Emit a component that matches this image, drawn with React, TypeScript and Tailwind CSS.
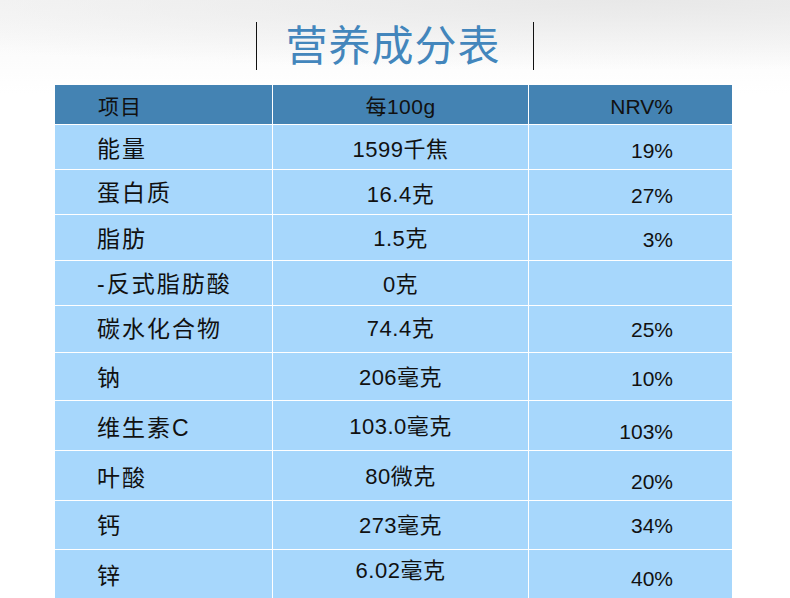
const rows = [
  { name: '能量', amount: '1599千焦', nrv: '19%', h: 'h-[44px]', a: 'pt-[5px]', b: 'pt-[6px]', c: 'pt-[6px]' },
  { name: '蛋白质', amount: '16.4克', nrv: '27%', h: 'h-[44px]', a: 'pt-[2px]', b: 'pt-[6px]', c: 'pt-[6px]' },
  { name: '脂肪', amount: '1.5克', nrv: '3%', h: 'h-[45px]', a: 'pt-[3px]', b: 'pt-[3px]', c: 'pt-[3px]' },
  { name: '-反式脂肪酸', amount: '0克', nrv: '', h: 'h-[44px]', a: 'pt-[3px]', b: 'pt-[3px]', c: 'pt-[3px]' },
  { name: '碳水化合物', amount: '74.4克', nrv: '25%', h: 'h-[46px]', a: 'pt-0', b: 'pt-0', c: 'pt-0' },
  { name: '钠', amount: '206毫克', nrv: '10%', h: 'h-[47px]', a: 'pt-[3px]', b: 'pt-[3px]', c: 'pt-[3px]' },
  { name: '维生素C', amount: '103.0毫克', nrv: '103%', h: 'h-[49px]', a: 'pt-[5px]', b: 'pt-[3px]', c: 'pt-[12px]' },
  { name: '叶酸', amount: '80微克', nrv: '20%', h: 'h-[49px]', a: 'pt-[5px]', b: 'pt-[3px]', c: 'pt-[12px]' },
  { name: '钙', amount: '273毫克', nrv: '34%', h: 'h-[48px]', a: 'pt-[3px]', b: 'pt-[1px]', c: 'pt-[1px]' },
  { name: '锌', amount: '6.02毫克', nrv: '40%', h: 'h-[48px]', a: 'pt-[4px]', b: 'pb-[7px]', c: 'pt-[8px]' },
];

const font = "font-['Liberation_Sans','Noto_Sans_CJK_SC',sans-serif]";

export default function App() {
  return (
    <div
      className={`w-[790px] h-[598px] overflow-hidden bg-white bg-[radial-gradient(120%_70px_at_80%_0%,#e8e8e8,rgba(255,255,255,0)),linear-gradient(180deg,#f7f7f7_0px,#ffffff_95px)] ${font} text-[#111]`}
    >
      {/* title */}
      <div className="h-[85px] flex justify-center pt-[22px]">
        <div className="flex items-start">
          <div className="w-px h-[48px] bg-[#111]" />
          <div className="w-[276px] flex justify-center pr-[4px]">
            <span className="text-[42px] leading-[42px] tracking-[1px] text-[#4386bc] font-['Noto_Sans_CJK_SC',sans-serif]">
              营养成分表
            </span>
          </div>
          <div className="w-px h-[48px] bg-[#111]" />
        </div>
      </div>

      {/* table */}
      <div className="ml-[55px] w-[677px] grid grid-cols-[217px_255px_203px] gap-px bg-white">
        <div className="h-[39px] bg-[#4483b3] flex items-center pl-[43px] pt-[4px] text-[21px] tracking-[1px]">项目</div>
        <div className="h-[39px] bg-[#4483b3] flex items-center justify-center pt-[4px] text-[21px] tracking-[0.5px]">每100g</div>
        <div className="h-[39px] bg-[#4483b3] flex items-center justify-end pr-[59px] pt-[4px] text-[21px]">NRV%</div>

        {rows.map((r) => (
          <div key={r.name} className="contents">
            <div className={`${r.h} bg-[#a7d7fc] flex items-center pl-[42px] text-[23px] tracking-[2px] leading-none ${r.a}`}>
              {r.name}
            </div>
            <div className={`${r.h} bg-[#a7d7fc] flex items-center justify-center text-[22px] tracking-[0.5px] leading-none ${r.b}`}>
              {r.amount}
            </div>
            <div className={`${r.h} bg-[#a7d7fc] flex items-center justify-end pr-[59px] text-[21px] leading-none ${r.c}`}>
              {r.nrv}
            </div>
          </div>
        ))}
      </div>
    </div>
  );
}
